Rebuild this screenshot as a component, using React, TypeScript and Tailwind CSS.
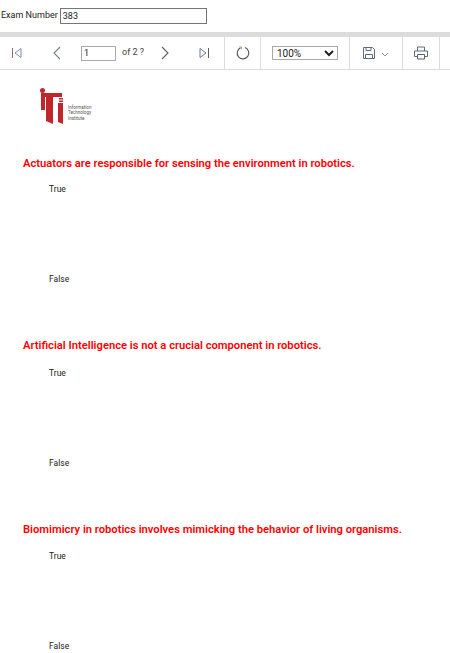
import { ReactNode } from 'react';

const questions = [
  { text: 'Actuators are responsible for sensing the environment in robotics.', trueGap: 'mt-[12px]', next: 'h-[182px]' },
  { text: 'Artificial Intelligence is not a crucial component in robotics.', trueGap: 'mt-[14px]', next: 'h-[184px]' },
  { text: 'Biomimicry in robotics involves mimicking the behavior of living organisms.', trueGap: 'mt-[13px]', next: 'h-[124px]' },
];

function ToolButton({ className, children }: { className: string; children: ReactNode }) {
  return <div className={`flex items-center justify-center ${className}`}>{children}</div>;
}

function Logo() {
  return (
    <div className="flex items-end h-[38px] w-[52px]">
      <svg width="26" height="38" viewBox="0 0 26 38" className="shrink-0">
        <circle cx="2.500" cy="2.500" r="2.500" fill="#c0272d" />
        <path d="M1 5h21v4H13v27l-7-3V9H5v13H1z" fill="#c0272d" />
        <path d="M19 10h4v1.500h-4zM19 12.500h4V14h-4z" fill="#c0272d" />
        <path d="M18 15h5v21l-5-2z" fill="#c0272d" />
      </svg>
      <div className="ml-[2px] mb-[5px] text-[4.500px] leading-[5.500px] text-[#555] whitespace-nowrap font-['Roboto',sans-serif]">
        <div>Information</div>
        <div>Technology</div>
        <div>Institute</div>
      </div>
    </div>
  );
}

export default function App() {
  return (
    <div className="w-[450px] h-[653px] overflow-hidden bg-white font-['Roboto',sans-serif] text-black">
      {/* Parametro */}
      <div className="h-[32px] flex items-center pl-[1px] pb-[1px]">
        <span className="text-[9px] text-[#222]">Exam Number</span>
        <input
          readOnly
          value="383"
          className="ml-[2px] w-[147px] h-[16px] border border-[#767676] px-[2px] text-[9px] text-[#222] outline-none"
        />
      </div>
      <div className="h-[5px] bg-[#dcdcdc]" />

      {/* Barra */}
      <div className="h-[33px] flex border-b border-[#dcdcdc] text-[#555]">
        <ToolButton className="w-[224px] relative">
          <div className="flex items-center w-full">
            <svg width="12" height="12" viewBox="0 0 12 12" className="ml-[11px]" fill="none">
              <path d="M1.500 1v10" stroke="#8d6a78" />
              <path d="M10 1.500 4 6l6 4.500z" stroke="#7d8ba0" />
            </svg>
            <svg width="10" height="14" viewBox="0 0 10 14" className="ml-[29px]" fill="none">
              <path d="M8 1 2 7l6 6" stroke="#79808c" strokeWidth="1.100" />
            </svg>
            <input
              readOnly
              value="1"
              className="ml-[19px] w-[35px] h-[15px] border border-[#a9a9a9] px-[2px] text-[9px] text-[#222] outline-none"
            />
            <span className="ml-[6px] text-[9px] text-[#444]">of 2 ?</span>
            <svg width="10" height="14" viewBox="0 0 10 14" className="ml-[16px]" fill="none">
              <path d="M2 1l6 6-6 6" stroke="#5a5f68" strokeWidth="1.100" />
            </svg>
            <svg width="12" height="12" viewBox="0 0 12 12" className="ml-[28px]" fill="none">
              <path d="M2 1.500 8 6l-6 4.500z" stroke="#6b7a92" />
              <path d="M10.500 1v10" stroke="#5a5f68" />
            </svg>
          </div>
        </ToolButton>
        <ToolButton className="w-[36px] border-l border-[#dcdcdc]">
          <svg width="14" height="14" viewBox="0 0 14 14" fill="none">
            <path d="M4.500 1.800A5.800 5.800 0 1 0 9 1.600" stroke="#555" strokeWidth="1.100" />
            <path d="M3 1h2.500v2.500" stroke="#c78a4a" strokeWidth="0.800" />
          </svg>
        </ToolButton>
        <ToolButton className="w-[89px] border-l border-[#dcdcdc]">
          <select className="w-[66px] h-[14px] border border-[#a9a9a9] text-[10px] text-[#222] bg-white outline-none">
            <option>100%</option>
          </select>
        </ToolButton>
        <ToolButton className="w-[53px] border-l border-[#dcdcdc]">
          <svg width="12" height="12" viewBox="0 0 12 12" fill="none">
            <path d="M.5.5h9l2 2v9H.5z" stroke="#5a6b85" />
            <path d="M3 .5v3h5v-3M2.500 11.500v-4h7v4" stroke="#5a6b85" />
          </svg>
          <svg width="8" height="5" viewBox="0 0 8 5" fill="none" className="ml-[6px] mt-[3px]">
            <path d="M1 1l3 3 3-3" stroke="#8d9bb0" />
          </svg>
        </ToolButton>
        <ToolButton className="w-[37px] border-l border-[#dcdcdc]">
          <svg width="14" height="14" viewBox="0 0 14 14" fill="none">
            <path d="M3.500 5V1h7v4M3.500 10.500h-3V5h13v5.500h-3" stroke="#5a6b85" />
            <path d="M3.500 8.500h7v4.500h-7z" stroke="#5a5f68" />
          </svg>
        </ToolButton>
        <div className="w-[11px] border-l border-[#dcdcdc]" />
      </div>

      {/* Reporte */}
      <div className="pl-[23px]">
        <div className="pl-[17px] pt-[18px] h-[86px]">
          <Logo />
        </div>
        {questions.map((q) => (
          <div key={q.text} className={q.next}>
            <p className="text-[11.200px] leading-[15px] font-semibold text-[#ff0000] whitespace-nowrap">{q.text}</p>
            <p className={`pl-[26px] ${q.trueGap} text-[8.500px] leading-[12px] text-[#222]`}>True</p>
            <p className="pl-[26px] mt-[78px] text-[8.500px] leading-[12px] text-[#222]">False</p>
          </div>
        ))}
      </div>
    </div>
  );
}
